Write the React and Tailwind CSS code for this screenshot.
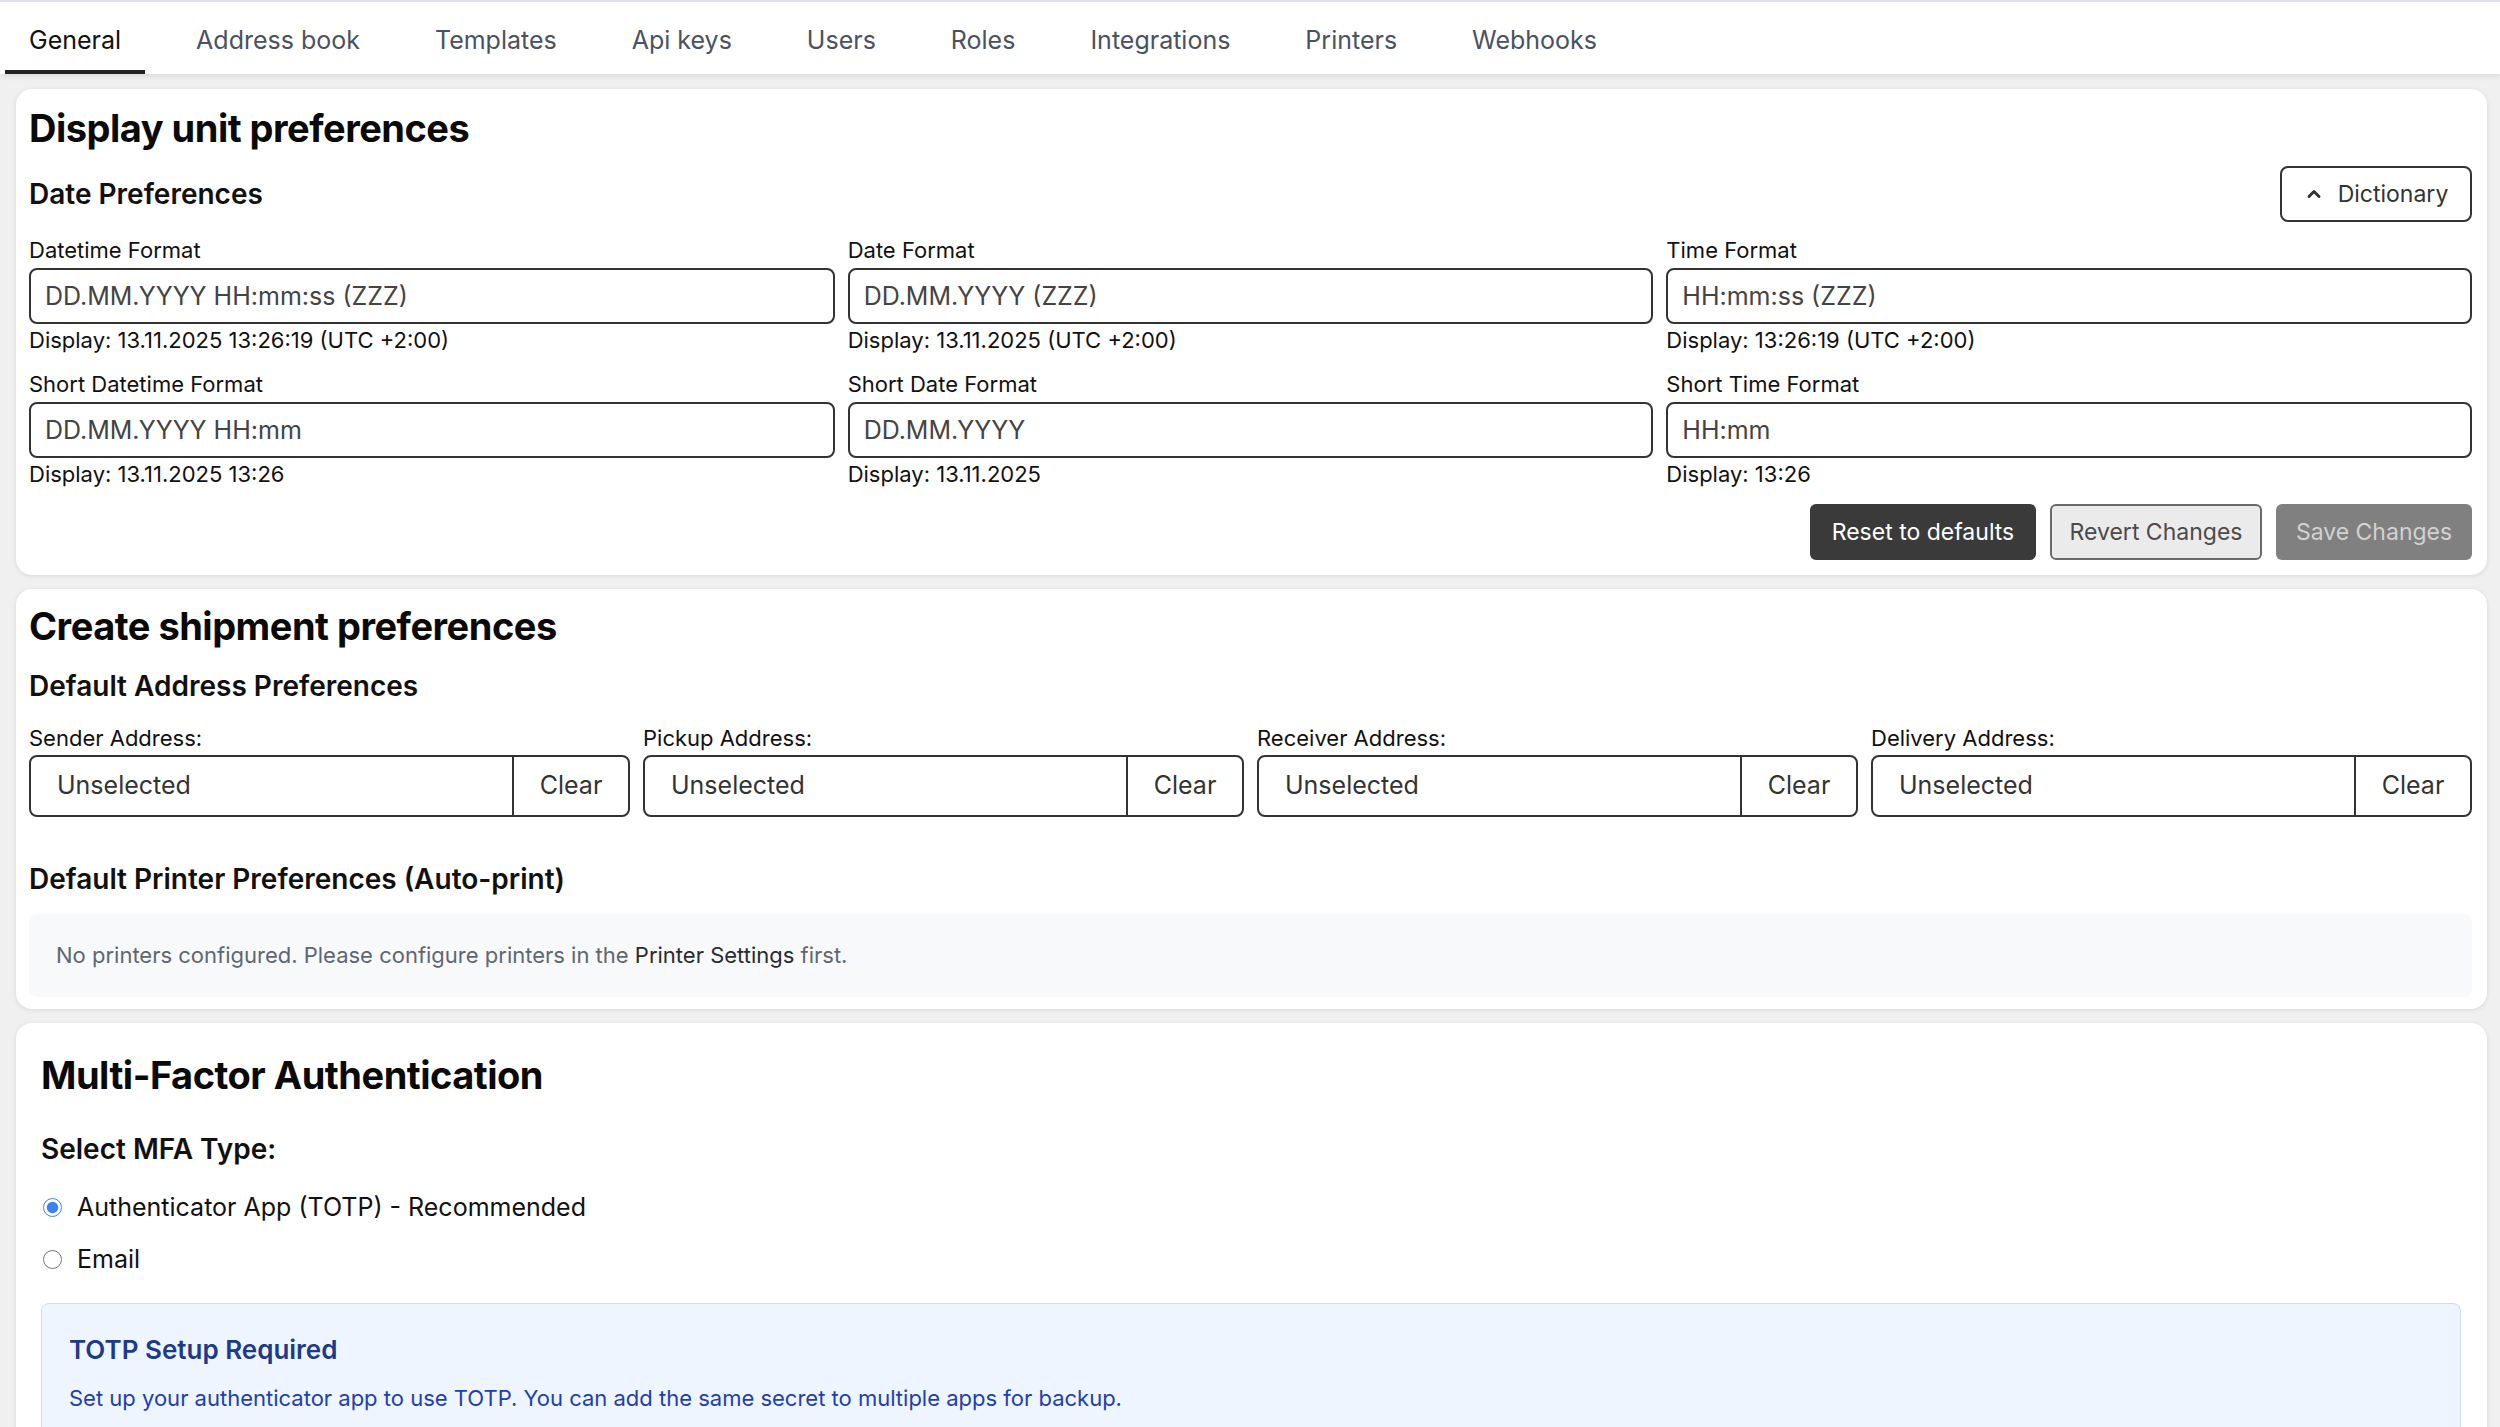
import { ChevronUp } from 'lucide-react';

const tabs = ['General', 'Address book', 'Templates', 'Api keys', 'Users', 'Roles', 'Integrations', 'Printers', 'Webhooks'];

const dateFields = [
  { label: 'Datetime Format', value: 'DD.MM.YYYY HH:mm:ss (ZZZ)', display: 'Display: 13.11.2025 13:26:19 (UTC +2:00)' },
  { label: 'Date Format', value: 'DD.MM.YYYY (ZZZ)', display: 'Display: 13.11.2025 (UTC +2:00)' },
  { label: 'Time Format', value: 'HH:mm:ss (ZZZ)', display: 'Display: 13:26:19 (UTC +2:00)' },
  { label: 'Short Datetime Format', value: 'DD.MM.YYYY HH:mm', display: 'Display: 13.11.2025 13:26' },
  { label: 'Short Date Format', value: 'DD.MM.YYYY', display: 'Display: 13.11.2025' },
  { label: 'Short Time Format', value: 'HH:mm', display: 'Display: 13:26' },
];

const addresses = ['Sender Address:', 'Pickup Address:', 'Receiver Address:', 'Delivery Address:'];

function Card({ className, children }) {
  return (
    <section className={`bg-white rounded-[16px] shadow-[0_1px_5px_rgba(0,0,0,0.10)] ${className}`}>
      {children}
    </section>
  );
}

function FormatField({ label, value, display }) {
  return (
    <div className="flex flex-col">
      <label className="text-[22px] leading-[28px] text-[#111]">{label}</label>
      <input
        readOnly
        value={value}
        className="mt-[4px] h-[56px] w-full rounded-[8px] border-2 border-[#333] px-[14px] text-[25px] text-[#444] outline-none"
      />
      <span className="text-[22px] leading-[28px] text-[#111] mt-[2px]">{display}</span>
    </div>
  );
}

function AddressPicker({ label }) {
  return (
    <div className="flex flex-col">
      <span className="text-[22px] leading-[28px] text-[#111]">{label}</span>
      <div className="mt-[3px] flex h-[62px] rounded-[8px] border-2 border-[#333] overflow-hidden">
        <div className="flex-1 flex items-center pl-[26px] text-[25px] text-[#333]">Unselected</div>
        <button className="w-[116px] border-l-2 border-[#333] text-[25px] text-[#333]">Clear</button>
      </div>
    </div>
  );
}

export default function App() {
  return (
    <div className="min-h-screen bg-[#f0f0f0] font-['Inter',sans-serif] border-t-[2px] border-[#e4e4f1]">
      {/* tab strip */}
      <nav className="h-[72px] bg-white shadow-[0_2px_6px_rgba(0,0,0,0.10)] flex items-stretch gap-[27px] pl-[5px]">
        {tabs.map((t, i) => (
          <div
            key={t}
            className={
              i === 0
                ? 'px-[24px] flex items-center text-[25px] text-[#111] border-b-[4px] border-[#222] pt-[10px]'
                : 'px-[24px] flex items-center text-[25px] text-[#4a5262] pt-[6px]'
            }
          >
            {t}
          </div>
        ))}
      </nav>

      <main className="pl-[16px] pr-[13px] pt-[15px] flex flex-col gap-[14px]">
        {/* Display unit preferences */}
        <Card className="px-[13px] pr-[15px] pt-[15px] pb-[15px]">
          <h1 className="text-[38px] leading-[48px] font-bold text-[#0a0a0a] tracking-[-0.5px]">Display unit preferences</h1>
          <div className="mt-[14px] flex items-center justify-between">
            <h2 className="text-[28px] font-semibold text-[#111]">Date Preferences</h2>
            <button className="h-[56px] w-[192px] rounded-[8px] border-2 border-[#333] flex items-center justify-center gap-[14px] text-[23px] text-[#333]">
              <ChevronUp size={20} strokeWidth={3.5} />
              Dictionary
            </button>
          </div>
          <div className="mt-[14px] grid grid-cols-3 gap-x-[13px] gap-y-[16px]">
            {dateFields.map((f) => (
              <FormatField key={f.label} {...f} />
            ))}
          </div>
          <div className="mt-[16px] flex justify-end gap-[14px]">
            <button className="h-[56px] w-[226px] rounded-[6px] bg-[#3a3a3a] text-white text-[23px]">Reset to defaults</button>
            <button className="h-[56px] w-[212px] rounded-[6px] bg-[#ebebeb] border-2 border-[#6a6a6a] text-[#4a4a4a] text-[23px]">Revert Changes</button>
            <button className="h-[56px] w-[196px] rounded-[6px] bg-[#808080] text-[#d2d2d2] text-[23px]">Save Changes</button>
          </div>
        </Card>

        {/* Create shipment preferences */}
        <Card className="px-[13px] pr-[15px] pt-[13px] pb-[12px]">
          <h1 className="text-[38px] leading-[48px] font-bold text-[#0a0a0a] tracking-[-0.5px]">Create shipment preferences</h1>
          <h2 className="mt-[18px] text-[28px] leading-[36px] font-semibold text-[#111]">Default Address Preferences</h2>
          <div className="mt-[20px] grid grid-cols-4 gap-x-[13px]">
            {addresses.map((a) => (
              <AddressPicker key={a} label={a} />
            ))}
          </div>
          <h2 className="mt-[44px] text-[28px] leading-[36px] font-semibold text-[#111]">Default Printer Preferences (Auto-print)</h2>
          <div className="mt-[17px] h-[83px] rounded-[8px] bg-[#f8f9fa] flex items-center px-[27px] text-[22px] text-[#5f6673]">
            <p>
              No printers configured. Please configure printers in the{' '}
              <span className="text-[#2b2b2b]">Printer Settings</span> first.
            </p>
          </div>
        </Card>

        {/* Multi-factor auth */}
        <Card className="pl-[25px] pr-[26px] pt-[29px] pb-[40px] rounded-b-none">
          <h1 className="text-[38px] leading-[46px] font-bold text-[#0a0a0a] tracking-[-0.5px]">Multi-Factor Authentication</h1>
          <h2 className="mt-[33px] text-[28px] leading-[36px] font-semibold text-[#111]">Select MFA Type:</h2>
          <div className="mt-[24px] flex flex-col gap-[20px]">
            <label className="flex items-center gap-[15px] pl-[2px] text-[25px] leading-[32px] text-[#111]">
              <input type="radio" name="mfa" defaultChecked className="w-[19px] h-[19px] accent-[#3b82f6]" />
              Authenticator App (TOTP) - Recommended
            </label>
            <label className="flex items-center gap-[15px] pl-[2px] text-[25px] leading-[32px] text-[#111]">
              <input type="radio" name="mfa" className="w-[19px] h-[19px] accent-[#3b82f6]" />
              Email
            </label>
          </div>
          <div className="mt-[28px] rounded-[8px] border-[1.5px] border-[#cadcf6] bg-[#eff5fe] px-[27px] pt-[30px] pb-[30px]">
            <h3 className="text-[26px] leading-[32px] font-semibold text-[#1e3a8a]">TOTP Setup Required</h3>
            <p className="mt-[18px] text-[22px] leading-[28px] text-[#1e40af]">
              Set up your authenticator app to use TOTP. You can add the same secret to multiple apps for backup.
            </p>
          </div>
        </Card>
      </main>
    </div>
  );
}
